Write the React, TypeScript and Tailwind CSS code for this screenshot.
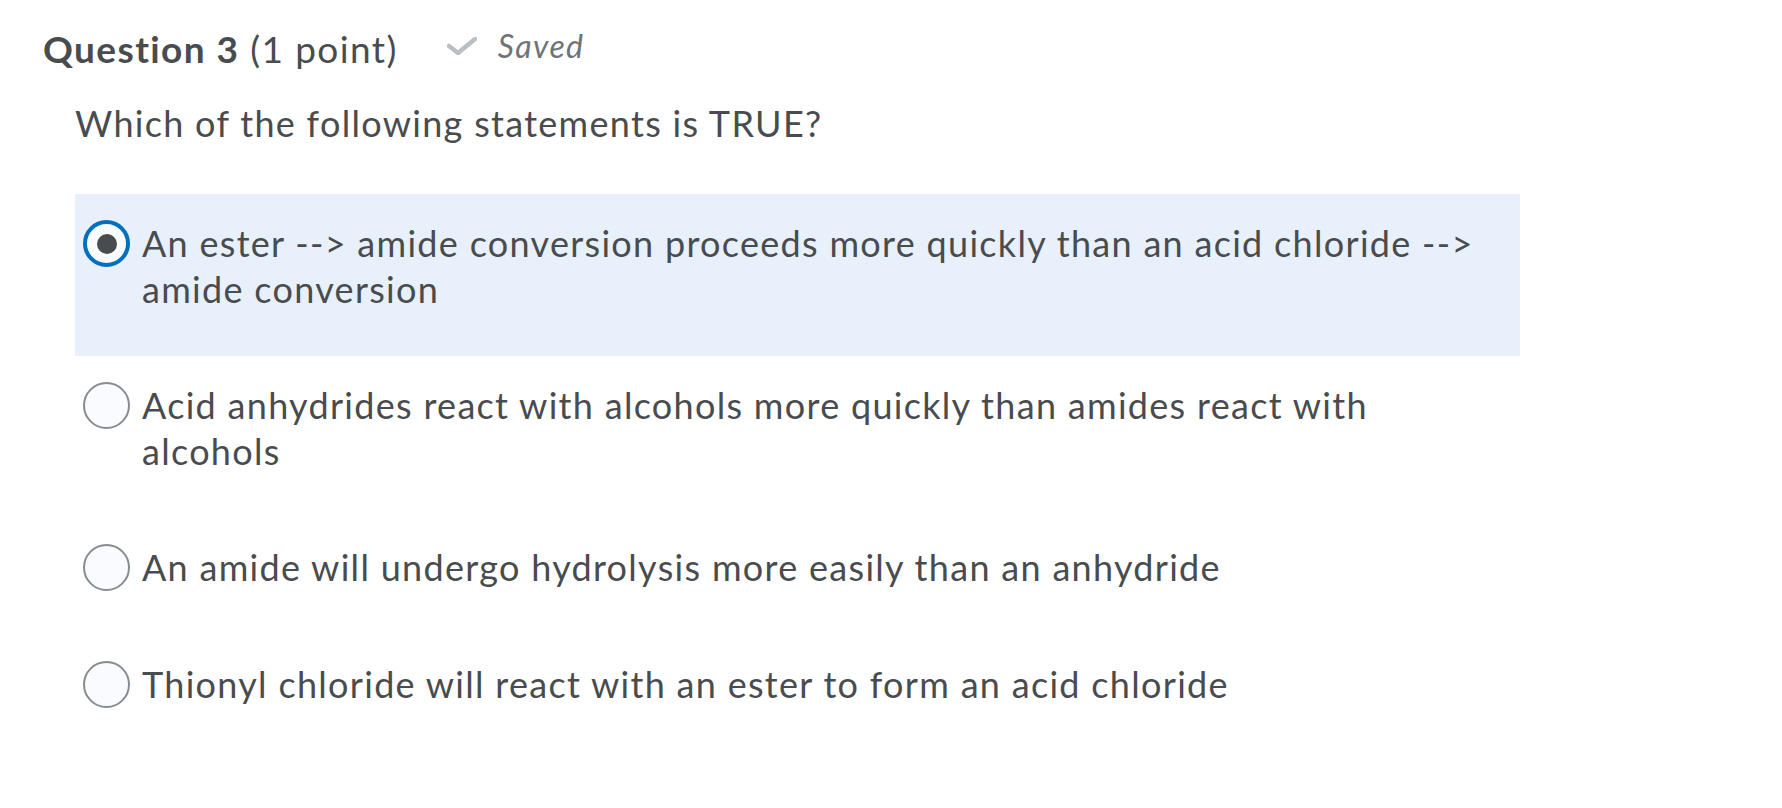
import { useState } from "react";

const CHOICES = [
  "An ester --> amide conversion proceeds more quickly than an acid chloride --> amide conversion",
  "Acid anhydrides react with alcohols more quickly than amides react with alcohols",
  "An amide will undergo hydrolysis more easily than an anhydride",
  "Thionyl chloride will react with an ester to form an acid chloride",
];

const CheckIcon = () => (
  <svg width="30" height="18" viewBox="0 0 30 18" fill="none">
    <path d="M2 9 L11 16 L28 2" stroke="#babfc3" strokeWidth="4.5" strokeLinecap="round" strokeLinejoin="round" />
  </svg>
);

const Radio = ({ checked }: { checked: boolean }) =>
  checked ? (
    <div className="w-[47px] h-[47px] rounded-full border-[4px] border-[#006fbf] bg-[#f9fbff] flex items-center justify-center shrink-0">
      <div className="w-[20px] h-[20px] rounded-full bg-[#494c4e]" />
    </div>
  ) : (
    <div className="w-[47px] h-[47px] rounded-full border-2 border-[#868c8f] bg-[#f9fbff] shrink-0" />
  );

export default function App() {
  const [selected, setSelected] = useState(0);

  return (
    <div className="w-[1782px] h-[808px] bg-white text-[#494c4e] font-['Lato',sans-serif]">
      <div className="pl-[43px] pt-[26px]">
        {/* Question header */}
        <div className="flex items-center h-[46px]">
          <h2 className="text-[37px] leading-[46px] tracking-[1.4px]">
            <span className="font-bold">Question 3</span> (1 point)
          </h2>
          <div className="ml-[49px] flex items-center gap-[21px] -mt-[6px]">
            <CheckIcon />
            <span className="italic text-[32px] tracking-[1.4px] text-[#6e7376]">Saved</span>
          </div>
        </div>

        <div className="pl-[32px]">
          <p className="mt-[28px] text-[36px] leading-[46px] tracking-[1.3px]">
            Which of the following statements is TRUE?
          </p>

          <div className="mt-[48px] w-[1445px]">
            {CHOICES.map((c, i) => (
              <div
                key={i}
                onClick={() => setSelected(i)}
                className={`flex items-start gap-[12px] pl-[8px] pt-[26px] pb-[44px] cursor-pointer ${
                  selected === i ? "bg-[#e8f0fb]" : ""
                }`}
              >
                <Radio checked={selected === i} />
                <span className="text-[36px] leading-[46px] tracking-[1.3px] max-w-[1340px]">{c}</span>
              </div>
            ))}
          </div>
        </div>
      </div>
    </div>
  );
}
